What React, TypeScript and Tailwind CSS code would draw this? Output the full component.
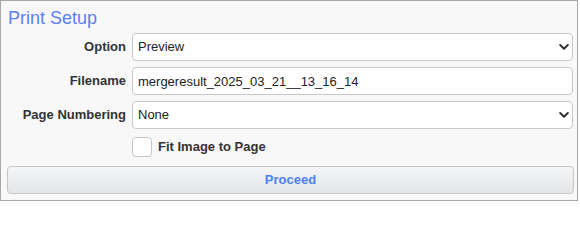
import React from "react";

function Chevron() {
  return (
    <svg
      className="pointer-events-none absolute right-[4px] top-1/2 -translate-y-1/2"
      width="10"
      height="7"
      viewBox="0 0 10 7"
      fill="none"
    >
      <path d="M1.2 1.5 L5 5.2 L8.8 1.5" stroke="#333" strokeWidth="2" strokeLinecap="round" strokeLinejoin="round" />
    </svg>
  );
}

function Select({ value, options }: { value: string; options: string[] }) {
  return (
    <div className="relative h-[28px]">
      <select
        defaultValue={value}
        className="h-[28px] w-full appearance-none rounded-[4px] border border-[#c8c8c8] bg-white pl-[5px] pr-[20px] text-[13px] text-[#222] outline-none [font-family:'Liberation_Sans',Arial,sans-serif]"
      >
        {options.map((o) => (
          <option key={o}>{o}</option>
        ))}
      </select>
      <Chevron />
    </div>
  );
}

export default function App() {
  return (
    <div className="h-[202px] w-[580px] bg-white [font-family:'Liberation_Sans',Arial,sans-serif]">
      <div className="flex h-[201px] w-[578px] flex-col border border-[#a8a8a8] bg-[#f8f8f8] pl-[6px] pr-[4px]">
        <div className="pl-[1px] pt-[7px] text-[18px] leading-[21px] text-[#5a80f2]">Print Setup</div>
        <div className="mt-[4px] grid grid-cols-[119px_1fr] items-center gap-x-[6px] gap-y-[6px]">
          <label className="text-right text-[13px] font-bold text-[#333]">Option</label>
          <Select value="Preview" options={["Preview", "Print", "PDF"]} />
          <label className="text-right text-[13px] font-bold text-[#333]">Filename</label>
          <input
            defaultValue="mergeresult_2025_03_21__13_16_14"
            className="h-[28px] w-full rounded-[4px] border border-[#c8c8c8] bg-white pl-[5px] text-[13px] text-[#222] outline-none"
          />
          <label className="text-right text-[13px] font-bold text-[#333]">Page Numbering</label>
          <Select value="None" options={["None", "Top", "Bottom"]} />
        </div>
        <div className="mt-[8px] flex items-center pl-[125px]">
          <span className="h-[20px] w-[20px] rounded-[4px] border border-[#c4c4c4] bg-white" />
          <span className="ml-[6px] text-[13px] font-bold text-[#333]">Fit Image to Page</span>
        </div>
        <button className="mt-[9px] h-[28px] w-[567px] rounded-[4px] border border-[#c6c6c6] bg-gradient-to-b from-[#f4f5f6] to-[#e4e6e8] text-[13px] font-bold text-[#4f7ff2]">
          Proceed
        </button>
      </div>
    </div>
  );
}
